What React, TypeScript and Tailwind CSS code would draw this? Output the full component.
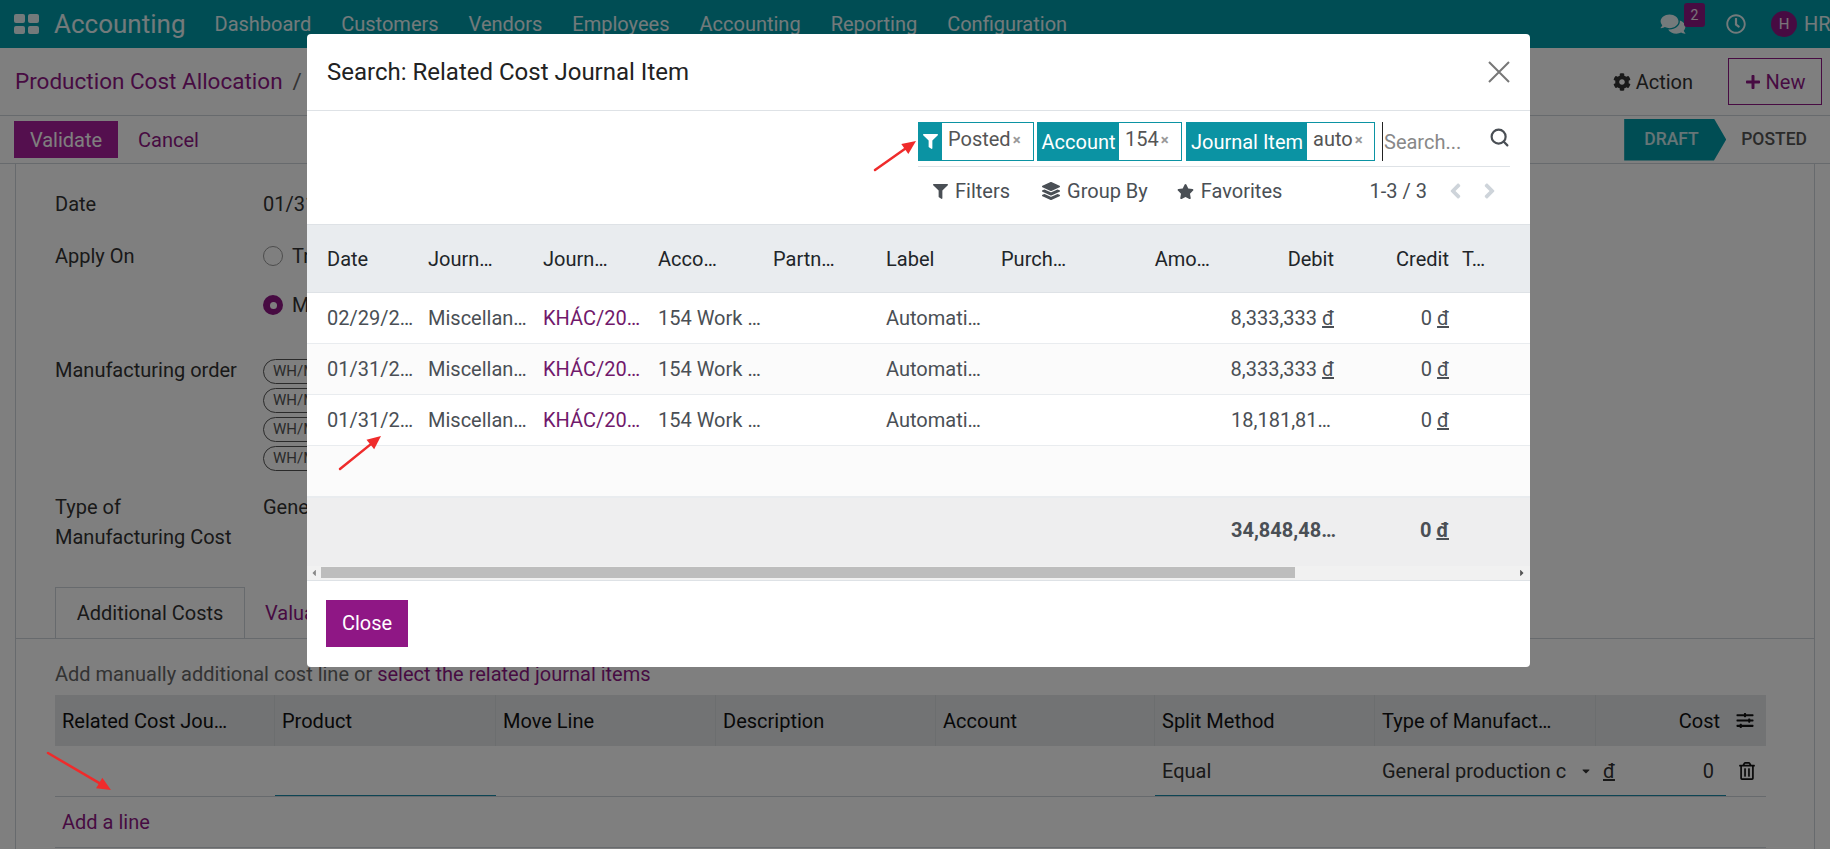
import { FaCog, FaFilter, FaLayerGroup, FaStar, FaPlus, FaComments, FaRegClock, FaSlidersH, FaRegTrashAlt, FaAngleLeft, FaAngleRight, FaCaretDown, FaCaretLeft, FaCaretRight } from 'react-icons/fa';
import { Search } from 'lucide-react';

const navItems = ['Dashboard', 'Customers', 'Vendors', 'Employees', 'Accounting', 'Reporting', 'Configuration'];

const chips = ['WH/MO/00012', 'WH/MO/00013', 'WH/MO/00014', 'WH/MO/00015'];

const bottomCols = ['Related Cost Jou…', 'Product', 'Move Line', 'Description', 'Account', 'Split Method', 'Type of Manufact…'];

const rows = [
  { date: '02/29/2…', debit: '8,333,333', cur: true, odd: false },
  { date: '01/31/2…', debit: '8,333,333', cur: true, odd: true },
  { date: '01/31/2…', debit: '18,181,81…', cur: false, odd: false },
];

function Arrow({ className, x1, y1, x2, y2 }: { className: string; x1: number; y1: number; x2: number; y2: number }) {
  const a = Math.atan2(y2 - y1, x2 - x1);
  const l = 15;
  const w = 0.42;
  const p1 = `${x2 - l * Math.cos(a - w)},${y2 - l * Math.sin(a - w)}`;
  const p2 = `${x2 - l * Math.cos(a + w)},${y2 - l * Math.sin(a + w)}`;
  return (
    <svg className={className} width="1830" height="849" viewBox="0 0 1830 849" fill="none">
      <line x1={x1} y1={y1} x2={x2 - 9 * Math.cos(a)} y2={y2 - 9 * Math.sin(a)} stroke="#ef2b2b" strokeWidth="2.5" strokeLinecap="round" />
      <polygon points={`${x2},${y2} ${p1} ${p2}`} fill="#ef2b2b" />
    </svg>
  );
}

export default function App() {
  return (
    <div className="relative h-[849px] w-[1830px] overflow-hidden bg-white text-[20px] text-[#333] font-['Roboto',sans-serif]">
      {/* Navbar */}
      <div className="flex h-[48px] items-center bg-[#009aa8] pl-[14px] text-white/90">
        <div className="grid h-[20px] w-[25px] grid-cols-2 gap-[3px]">
          <span className="rounded-[2px] bg-white/90" />
          <span className="rounded-[2px] bg-white/90" />
          <span className="rounded-[2px] bg-white/90" />
          <span className="rounded-[2px] bg-white/90" />
        </div>
        <span className="ml-[15px] mr-[-1px] text-[26px]">Accounting</span>
        {navItems.map(n => (
          <span key={n} className="ml-[30px]">{n}</span>
        ))}
        <div className="ml-auto flex items-center">
          <div className="relative mr-[40px]">
            <FaComments className="h-[22px] w-[26px] text-white/90" />
            <span className="absolute -right-[19px] -top-[10px] flex h-[24px] w-[21px] items-center justify-center rounded-[3px] bg-[#8f1785] text-[14px]">2</span>
          </div>
          <FaRegClock className="h-[20px] w-[20px] text-white/90" />
          <span className="ml-[25px] flex h-[26px] w-[26px] items-center justify-center rounded-full bg-[#8f1785] text-[15px]">H</span>
          <span className="ml-[7px] w-[26px] overflow-hidden">HR</span>
        </div>
      </div>

      {/* Breadcrumb */}
      <div className="flex h-[68px] items-center border-b border-[#ced4da] pl-[15px] pr-[8px]">
        <span className="text-[22.5px] text-[#8f1785]">Production Cost Allocation</span>
        <span className="ml-[10px] text-[22.5px] text-[#666]">/</span>
        <div className="ml-auto flex items-center">
          <FaCog className="h-[18px] w-[18px] text-[#333]" />
          <span className="ml-[5px]">Action</span>
          <div className="ml-[35px] flex h-[47px] w-[94px] items-center justify-center gap-[5px] border border-[#8f1785] text-[#8f1785]">
            <FaPlus className="h-[16px] w-[16px]" />
            <span>New</span>
          </div>
        </div>
      </div>

      {/* Buttons + status */}
      <div className="flex h-[48px] items-center border-b border-[#ced4da] pl-[14px] pr-[23px]">
        <span className="flex h-[37px] w-[104px] items-center justify-center bg-[#a81f9c] text-white">Validate</span>
        <span className="ml-[20px] text-[#8f1785]">Cancel</span>
        <div className="ml-auto flex items-center">
          <span className="flex h-[42px] w-[102px] items-center pl-[20px] text-[17.5px] font-medium text-white/80 bg-[#009aa8] [clip-path:polygon(0_0,88%_0,100%_50%,88%_100%,0_100%)]">DRAFT</span>
          <span className="ml-[15px] text-[17.5px] font-medium text-[#555]">POSTED</span>
        </div>
      </div>

      {/* Form sheet */}
      <div className="mx-[15px] h-[686px] border-x border-[#ced4da] px-[39px]">
        <div className="flex h-[56px] items-center pt-[24px]"><span className="w-[208px]">Date</span><span>01/31/2024</span></div>
        <div className="mt-[26px] flex h-[20px] items-center">
          <span className="w-[208px]">Apply On</span>
          <span className="h-[20px] w-[20px] rounded-full border border-[#999]" />
          <span className="ml-[9px]">Transfer</span>
        </div>
        <div className="mt-[29px] flex h-[20px] items-center pl-[208px]">
          <span className="flex h-[20px] w-[20px] items-center justify-center rounded-full bg-[#8f1785]"><span className="h-[7px] w-[7px] rounded-full bg-white" /></span>
          <span className="ml-[9px]">Manufacturing</span>
        </div>
        <div className="mt-[44px] flex">
          <span className="w-[208px] leading-[22px]">Manufacturing order</span>
          <div className="flex flex-col gap-[4px]">
            {chips.map(c => (
              <span key={c} className="flex h-[25px] w-[150px] items-center rounded-full border border-[#555] pl-[9px] text-[15px] text-[#555]">{c}</span>
            ))}
          </div>
        </div>
        <div className="mt-[21px] flex leading-[30px]">
          <span className="w-[208px]">Type of<br />Manufacturing Cost</span>
          <span className="text-[#333]">General production cost</span>
        </div>
        {/* Tabs */}
        <div className="mt-[36px] -mx-[39px] flex h-[51px] items-end border-b border-[#ced4da] px-[39px]">
          <span className="flex h-[51px] w-[190px] items-center justify-center border border-b-0 border-[#ced4da] bg-white">Additional Costs</span>
          <span className="flex h-[50px] items-center pl-[20px] text-[#8f1785]">Valuation Adjustments</span>
        </div>
        <div className="flex h-[56px] items-end pb-[6px] text-[#666]">
          Add manually additional cost line or&nbsp;<span className="text-[#8f1785]">select the related journal items</span>
        </div>
        {/* Bottom table */}
        <div className="w-[1711px]">
          <div className="grid h-[51px] grid-cols-[220px_221px_220px_220px_219px_220px_221px_170px] items-center bg-[#e4e6e9] text-[#111]">
            {bottomCols.map(c => (
              <span key={c} className="flex h-full items-center whitespace-nowrap border-r border-[#d9dcdf] px-[7px]">{c}</span>
            ))}
            <span className="flex items-center justify-end pr-[11px]">Cost<FaSlidersH className="ml-[15px] h-[17px] w-[20px]" /></span>
          </div>
          <div className="grid h-[51px] grid-cols-[220px_221px_220px_220px_219px_220px_221px_170px] border-b border-[#ced4da]">
            <span />
            <span className="border-b border-[#1a8aa8]" />
            <span />
            <span />
            <span />
            <span className="flex items-center border-b border-[#1a8aa8] px-[7px]">Equal</span>
            <span className="flex items-center justify-between border-b border-[#1a8aa8] pl-[7px] pr-[4px]"><span className="w-[187px] overflow-hidden whitespace-nowrap">General production c</span><FaCaretDown className="h-[12px] w-[12px]" /></span>
            <span className="flex items-center">
              <span className="flex h-full w-[130px] items-center justify-between border-b border-[#1a8aa8] pl-[7px] pr-[12px]"><span className="underline">đ</span><span>0</span></span>
              <FaRegTrashAlt className="ml-[13px] h-[18px] w-[16px] text-[#111]" />
            </span>
          </div>
          <div className="flex h-[51px] items-center border-b border-[#ced4da] pl-[7px] text-[#8f1785]">Add a line</div>
        </div>
      </div>

      {/* Backdrop */}
      <div className="absolute inset-0 bg-black/50" />
      <Arrow className="absolute left-0 top-0" x1={48} y1={753} x2={111} y2={790} />

      {/* Dialog */}
      <div className="absolute left-[307px] top-[34px] flex h-[633px] w-[1223px] flex-col overflow-hidden rounded-[4px] bg-white">
        <div className="flex h-[77px] shrink-0 items-center justify-between border-b border-[#dee2e6] px-[20px]">
          <span className="text-[24px] text-[#222]">Search: Related Cost Journal Item</span>
          <svg width="22" height="22" viewBox="0 0 22 22" fill="none" stroke="#777" strokeWidth="2"><path d="M1 1l20 20M21 1L1 21" /></svg>
        </div>
        {/* Control panel */}
        <div className="flex h-[113px] shrink-0 flex-col items-end pr-[20px]">
          <div className="mt-[11px] flex h-[45px] w-[592px] border-b border-[#dee2e6] pb-[5px]">
            <div className="flex h-[39px] w-[116px] border border-[#0b93a3]">
              <span className="flex w-[23px] items-center justify-center bg-[#0b93a3] text-white"><FaFilter className="h-[15px] w-[15px]" /></span>
              <span className="flex flex-1 items-start pl-[6px] pt-[1px] text-[#555]">Posted<span className="ml-[2px] mt-[5px] text-[15px] font-bold text-[#999]">×</span></span>
            </div>
            <div className="ml-[3px] flex h-[39px] w-[145px] border border-[#0b93a3]">
              <span className="flex w-[81px] items-center justify-center bg-[#0b93a3] text-white">Account</span>
              <span className="flex flex-1 items-start pl-[6px] pt-[1px] text-[#555]">154<span className="ml-[2px] mt-[5px] text-[15px] font-bold text-[#999]">×</span></span>
            </div>
            <div className="ml-[4px] flex h-[39px] w-[189px] border border-[#0b93a3]">
              <span className="flex w-[120px] items-center justify-center bg-[#0b93a3] text-white">Journal Item</span>
              <span className="flex flex-1 items-start pl-[6px] pt-[1px] text-[#555]">auto<span className="ml-[2px] mt-[5px] text-[15px] font-bold text-[#999]">×</span></span>
            </div>
            <span className="ml-[7px] flex h-[39px] items-center border-l border-l-[#222] pl-[1px] text-[#888]">Search...</span>
            <Search className="ml-auto mt-[5px] h-[21px] w-[21px] text-[#4a4f55]" strokeWidth={2.5} />
          </div>
          <div className="flex h-[48px] w-[592px] items-center pl-[15px] text-[#4a4f55]">
            <FaFilter className="h-[15px] w-[15px]" />
            <span className="ml-[7px]">Filters</span>
            <FaLayerGroup className="ml-[32px] h-[18px] w-[18px]" />
            <span className="ml-[7px]">Group By</span>
            <FaStar className="ml-[29px] h-[17px] w-[17px]" />
            <span className="ml-[7px]">Favorites</span>
            <span className="ml-auto">1-3 / 3</span>
            <FaAngleLeft className="ml-[21px] h-[24px] w-[15px] text-[#ced4da]" />
            <FaAngleRight className="ml-[19px] mr-[13px] h-[24px] w-[15px] text-[#ced4da]" />
          </div>
        </div>

        {/* Results table */}
        <div className="shrink-0 overflow-hidden">
          <table className="w-[1295px] table-fixed border-collapse whitespace-nowrap">
            <colgroup>
              <col className="w-[116px]" />
              <col className="w-[115px]" />
              <col className="w-[115px]" />
              <col className="w-[115px]" />
              <col className="w-[113px]" />
              <col className="w-[115px]" />
              <col className="w-[77px]" />
              <col className="w-[75px]" />
              <col className="w-[67px]" />
              <col className="w-[124px]" />
              <col className="w-[115px]" />
              <col className="w-[148px]" />
            </colgroup>
            <thead>
              <tr className="h-[68px] border-y border-[#dee2e6] bg-[#e9ecef] text-left text-[#212529]">
                <th className="pl-[20px] pr-[5px] font-normal">Date</th>
                <th className="px-[5px] font-normal">Journ…</th>
                <th className="px-[5px] font-normal">Journ…</th>
                <th className="px-[5px] font-normal">Acco…</th>
                <th className="px-[5px] font-normal">Partn…</th>
                <th className="px-[5px] font-normal">Label</th>
                <th className="px-[5px] font-normal">Purch…</th>
                <th />
                <th className="pr-[5px] text-right font-normal">Amo…</th>
                <th className="px-[5px] text-right font-normal">Debit</th>
                <th className="px-[5px] text-right font-normal">Credit</th>
                <th className="px-[8px] font-normal">T…</th>
              </tr>
            </thead>
            <tbody className="text-[#4a4f55]">
              {rows.map((r, i) => (
                <tr key={i} className={`h-[51px] border-b border-[#e9ecef] ${r.odd ? 'bg-[#fbfbfb]' : 'bg-white'}`}>
                  <td className="pl-[20px] pr-[5px]">{r.date}</td>
                  <td className="px-[5px]">Miscellan…</td>
                  <td className="px-[5px] text-[#71196b]">KHÁC/20…</td>
                  <td className="px-[5px]">154 Work …</td>
                  <td />
                  <td className="px-[5px]">Automati…</td>
                  <td />
                  <td />
                  <td />
                  <td className={r.cur ? 'px-[5px] text-right' : 'pl-[16px] pr-[5px]'}>{r.debit}{r.cur && <> <span className="underline">đ</span></>}</td>
                  <td className="px-[5px] text-right">0 <span className="underline">đ</span></td>
                  <td />
                </tr>
              ))}
              <tr className="h-[51px] border-b-2 border-[#e9ecef] bg-[#fbfbfb]"><td colSpan={12} /></tr>
            </tbody>
            <tfoot>
              <tr className="h-[69px] bg-[#eeeeef] font-bold text-[#4a4f55]">
                <td colSpan={9} />
                <td className="pb-[4px] pl-[16px] pr-[5px]">34,848,48…</td>
                <td className="pb-[4px] px-[5px] text-right">0 <span className="underline">đ</span></td>
                <td />
              </tr>
            </tfoot>
          </table>
        </div>
        {/* Scrollbar */}
        <div className="flex h-[15px] shrink-0 items-center border-b border-[#dee2e6] bg-[#f1f1f1]">
          <FaCaretLeft className="ml-[3px] h-[10px] w-[8px] text-[#888]" />
          <span className="ml-[3px] h-[11px] w-[974px] bg-[#bdbdbd]" />
          <FaCaretRight className="ml-auto mr-[4px] h-[10px] w-[8px] text-[#555]" />
        </div>
        <div className="pl-[19px] pt-[19px]">
          <span className="flex h-[47px] w-[82px] items-center justify-center bg-[#8f1785] text-white">Close</span>
        </div>
      </div>

      <Arrow className="absolute left-0 top-0" x1={875} y1={170} x2={916} y2={141} />
      <Arrow className="absolute left-0 top-0" x1={340} y1={469} x2={381} y2={436} />
    </div>
  );
}
